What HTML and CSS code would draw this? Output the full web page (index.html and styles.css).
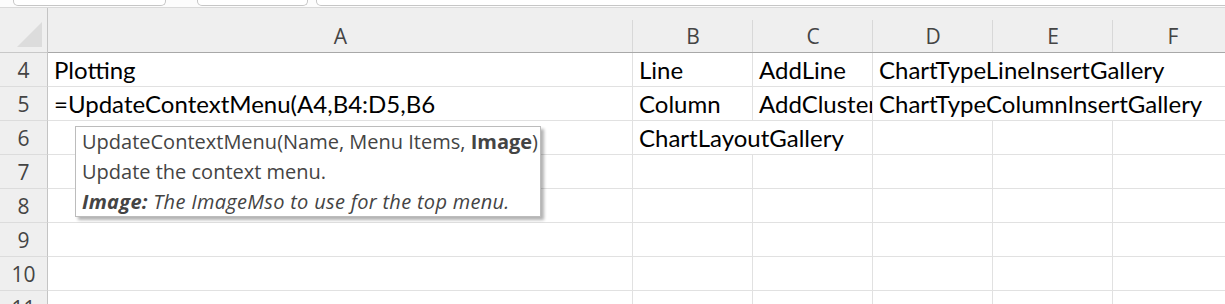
FILE: index.html
```html
<!DOCTYPE html>
<html lang="en">
<head>
  <meta charset="UTF-8">
  <title>Sheet</title>
  <link rel="stylesheet" href="styles.css">
</head>
<body>
  <!-- Restinho da barra de fórmulas -->
  <div class="topbar">
    <div class="box name-box"></div>
    <div class="box fx-box"></div>
    <div class="box formula-box"></div>
  </div>

  <div class="sheet">
    <div class="grid">
      <div class="corner">
        <svg width="26" height="26" viewBox="0 0 26 26"><polygon points="25,0 25,25 0,25" fill="#dcdcdc"/></svg>
      </div>
      <div class="col-head">A</div>
      <div class="col-head">B</div>
      <div class="col-head">C</div>
      <div class="col-head">D</div>
      <div class="col-head">E</div>
      <div class="col-head">F</div>

      <div class="row-head">4</div>
      <div class="cell">Plotting</div>
      <div class="cell">Line</div>
      <div class="cell">AddLine</div>
      <div class="cell span3">ChartTypeLineInsertGallery</div>

      <div class="row-head">5</div>
      <div class="cell">=UpdateContextMenu(A4,B4:D5,B6</div>
      <div class="cell">Column</div>
      <div class="cell clip">AddClusteredColumn</div>
      <div class="cell span3">ChartTypeColumnInsertGallery</div>

      <div class="row-head">6</div>
      <div class="cell"></div>
      <div class="cell span2">ChartLayoutGallery</div>
      <div class="cell"></div>
      <div class="cell"></div>
      <div class="cell"></div>

      <div class="row-head">7</div>
      <div class="cell"></div><div class="cell"></div><div class="cell"></div><div class="cell"></div><div class="cell"></div><div class="cell"></div>

      <div class="row-head">8</div>
      <div class="cell"></div><div class="cell"></div><div class="cell"></div><div class="cell"></div><div class="cell"></div><div class="cell"></div>

      <div class="row-head">9</div>
      <div class="cell"></div><div class="cell"></div><div class="cell"></div><div class="cell"></div><div class="cell"></div><div class="cell"></div>

      <div class="row-head">10</div>
      <div class="cell"></div><div class="cell"></div><div class="cell"></div><div class="cell"></div><div class="cell"></div><div class="cell"></div>

      <div class="row-head">11</div>
      <div class="cell"></div><div class="cell"></div><div class="cell"></div><div class="cell"></div><div class="cell"></div><div class="cell"></div>
    </div>

    <!-- Dica da função -->
    <div class="tooltip">
      <div>UpdateContextMenu(Name, Menu Items, <b>Image</b>)</div>
      <div>Update the context menu.</div>
      <div class="arg"><b>Image:</b> The ImageMso to use for the top menu.</div>
    </div>
  </div>
</body>
</html>
```

FILE: styles.css
```css
body {
  margin: 0;
  background: #ffffff;
  overflow: hidden;
  font-family: "Open Sans", sans-serif;
}
.topbar {
  height: 7px;
  border-bottom: 1px solid #d9d9d9;
  background: #fcfcfc;
  display: flex;
  overflow: hidden;
}
.box {
  height: 6px;
  background: #ffffff;
  border: 1px solid #c6c6c6;
  border-top: none;
  border-radius: 0 0 5px 5px;
  box-sizing: border-box;
}
.name-box {
  margin-left: 13px;
  width: 153px;
}
.fx-box {
  margin-left: 31px;
  width: 111px;
}
.formula-box {
  margin-left: 8px;
  flex: 1;
  margin-right: -10px;
}
.sheet {
  position: relative;
}
.grid {
  display: grid;
  grid-template-columns: 48px 585px repeat(5, 120px);
  grid-template-rows: 45px;
  grid-auto-rows: 34px;
}
.corner, .col-head, .row-head, .cell {
  box-sizing: border-box;
}
.corner {
  background: #efefef;
  border-right: 1px solid #c4c4c4;
  border-bottom: 1px solid #c8c8c8;
  display: flex;
  align-items: flex-end;
  justify-content: flex-end;
  padding: 0 4px 4px 0;
}
.corner svg {
  display: block;
}
.col-head {
  position: relative;
  background: #efefef;
  border-bottom: 1px solid #a8a8a8;
  color: #444444;
  font-size: 21px;
  display: flex;
  align-items: flex-end;
  justify-content: center;
  padding-bottom: 2px;
}
.col-head::after {
  content: "";
  position: absolute;
  right: 0;
  top: 12px;
  bottom: 0;
  width: 1px;
  background: #d8d8d8;
}
.row-head {
  background: #efefef;
  border-right: 1px solid #c4c4c4;
  border-bottom: 1px solid #dcdcdc;
  color: #444444;
  font-size: 21px;
  display: flex;
  align-items: center;
  justify-content: center;
}
.cell {
  border-right: 1px solid #e1e1e1;
  border-bottom: 1px solid #e1e1e1;
  font-family: "Lato", sans-serif;
  font-size: 24px;
  color: #000000;
  padding-left: 6px;
  white-space: nowrap;
  display: flex;
  align-items: center;
}
.clip {
  overflow: hidden;
}
.span2 {
  grid-column: span 2;
}
.span3 {
  grid-column: span 3;
}

/* Caixinha de ajuda da fórmula */
.tooltip {
  position: absolute;
  left: 75px;
  top: 118px;
  width: 466px;
  height: 91px;
  box-sizing: border-box;
  background: #ffffff;
  border: 1px solid #bcbcbc;
  box-shadow: 3px 3px 3px rgba(0, 0, 0, 0.3);
  padding: 0 6px;
  color: #444444;
  font-family: "Open Sans", sans-serif;
  font-size: 20px;
  line-height: 30px;
  white-space: nowrap;
}
.tooltip b {
  font-weight: 700;
}
.tooltip .arg {
  font-style: italic;
  letter-spacing: 0.3px;
}
```
